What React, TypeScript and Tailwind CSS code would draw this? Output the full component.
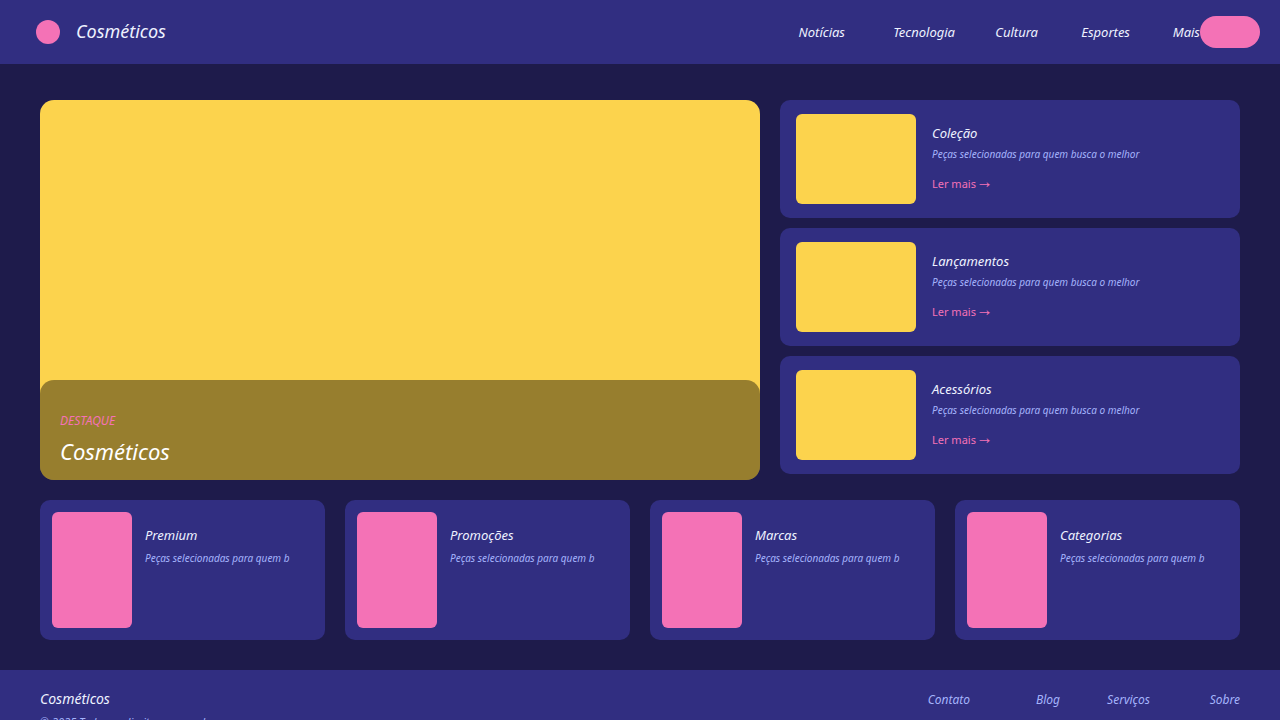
import { clsx } from 'clsx';

interface NavItem {
  label: string;
  width: string;
}

const NAV_ITEMS: NavItem[] = [
  { label: 'Notícias', width: 'w-20' },
  { label: 'Tecnologia', width: 'w-[110px]' },
  { label: 'Cultura', width: 'w-[83px]' },
  { label: 'Esportes', width: 'w-[92px]' },
  { label: 'Mais', width: 'w-[70px]' },
];

const SIDE_STORIES = ['Coleção', 'Lançamentos', 'Acessórios'];
const CATEGORIES = ['Premium', 'Promoções', 'Marcas', 'Categorias'];
const FOOTER_LINKS = ['Contato', 'Blog', 'Serviços', 'Sobre'];

const SUMMARY = 'Peças selecionadas para quem busca o melhor';

function Header() {
  return (
    <header className="flex h-16 items-center justify-between bg-[#312e81] pr-5 pl-9">
      <a href="#" className="flex items-center gap-4">
        <span className="size-6 rounded-full bg-[#f472b6]" />
        <span className="pb-0.5 text-[18px] leading-6">Cosméticos</span>
      </a>
      <div className="flex items-center">
        <nav className="flex text-[13px] leading-5">
          {NAV_ITEMS.map((item) => (
            <a key={item.label} href="#" className={clsx('text-right', item.width)}>
              {item.label}
            </a>
          ))}
        </nav>
        <button type="button" aria-label="Entrar" className="h-8 w-15 rounded-2xl bg-[#f472b6]" />
      </div>
    </header>
  );
}

function Hero() {
  return (
    <article className="flex h-[380px] flex-col justify-end rounded-[14px] bg-[#fcd34d]">
      <div className="h-[100px] rounded-[14px] bg-black/40 px-5 pt-8">
        <p className="text-[12px] leading-[18px] text-[#f472b6]">DESTAQUE</p>
        <h1 className="mt-1.5 text-[22px] leading-[30px] text-white">Cosméticos</h1>
      </div>
    </article>
  );
}

function SideStory({ title }: { title: string }) {
  return (
    <article className="flex gap-4 rounded-[10px] bg-[#312e81] px-4 py-3.5">
      <div className="h-[90px] w-[120px] shrink-0 rounded-md bg-[#fcd34d]" />
      <div className="pt-[9px]">
        <h2 className="text-[13px] leading-5">{title}</h2>
        <p className="mt-[3px] text-[10px] leading-4 text-[#a5b4fc]">{SUMMARY}</p>
        <a href="#" className="mt-3.5 block text-[11px] leading-4 text-[#f472b6] not-italic">
          Ler mais →
        </a>
      </div>
    </article>
  );
}

function CategoryCard({ title }: { title: string }) {
  return (
    <article className="flex gap-[13px] rounded-[10px] bg-[#312e81] p-3">
      <div className="h-[116px] w-20 shrink-0 rounded-md bg-[#f472b6]" />
      <div className="pt-[13px]">
        <h2 className="text-[13px] leading-5">{title}</h2>
        <p className="mt-[5px] text-[10px] leading-4 text-[#a5b4fc]">{SUMMARY.slice(0, 30)}</p>
      </div>
    </article>
  );
}

function Footer() {
  return (
    <footer className="flex justify-between bg-[#312e81] px-10 pt-[19px] pb-6">
      <div>
        <p className="text-[14px] leading-5">Cosméticos</p>
        <p className="mt-[5px] text-[11px] leading-4 text-[#a5b4fc]">
          © 2025 Todos os direitos reservados
        </p>
      </div>
      <nav className="flex pt-px text-[12px] leading-5 text-[#a5b4fc]">
        {FOOTER_LINKS.map((label) => (
          <a key={label} href="#" className="w-[90px] text-right">
            {label}
          </a>
        ))}
      </nav>
    </footer>
  );
}

export default function App() {
  return (
    <div className="flex min-h-screen flex-col bg-[#1e1b4b] font-['Noto_Sans','Noto_Sans_Math',sans-serif] text-[#eef2ff] italic">
      <Header />
      <main className="flex flex-col gap-5 px-10 pt-9 pb-[30px]">
        <section className="grid grid-cols-[36fr_23fr] items-start gap-5">
          <Hero />
          <div className="flex flex-col gap-2.5">
            {SIDE_STORIES.map((title) => (
              <SideStory key={title} title={title} />
            ))}
          </div>
        </section>
        <section className="grid grid-cols-4 gap-5">
          {CATEGORIES.map((title) => (
            <CategoryCard key={title} title={title} />
          ))}
        </section>
      </main>
      <Footer />
    </div>
  );
}
